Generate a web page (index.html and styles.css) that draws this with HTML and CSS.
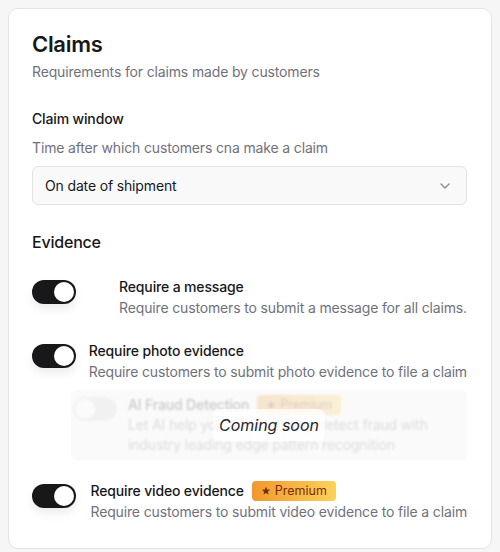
FILE: index.html
```html
<!DOCTYPE html>
<html>
<head>
<meta charset="utf-8">
<link rel="stylesheet" href="styles.css">
</head>
<body>
<div class="card">
  <h1 class="title">Claims</h1>
  <p class="subtitle">Requirements for claims made by customers</p>

  <div class="field">
    <div class="label">Claim window</div>
    <div class="helper">Time after which customers cna make a claim</div>
    <div class="select">
      <span>On date of shipment</span>
      <svg class="chevron" width="10" height="6" viewBox="0 0 10 6"><path d="M1 1l4 4 4-4" fill="none" stroke="#8a8a90" stroke-width="1.3" stroke-linecap="round" stroke-linejoin="round"/></svg>
    </div>
  </div>

  <h2 class="section">Evidence</h2>

  <div class="row row-first">
    <div class="toggle"><span class="thumb"></span></div>
    <div class="text">
      <div class="row-title">Require a message</div>
      <div class="row-desc">Require customers to submit a message for all claims.</div>
    </div>
  </div>

  <div class="row row-second">
    <div class="toggle"><span class="thumb"></span></div>
    <div class="text">
      <div class="row-title">Require photo evidence</div>
      <div class="row-desc">Require customers to submit photo evidence to file a claim</div>
    </div>
  </div>

  <div class="soon">
    <div class="soon-inner">
      <div class="toggle toggle-off"><span class="thumb"></span></div>
      <div class="soon-text">
        <div class="row-title">AI Fraud Detection <span class="badge"><svg width="10" height="10" viewBox="0 0 24 24"><path d="M12 2l2.9 6.3 6.9.7-5.2 4.6 1.5 6.8L12 16.9l-6.1 3.5 1.5-6.8L2.2 9l6.9-.7z" fill="#7a2e0e"/></svg>Premium</span></div>
        <div class="row-desc">Let AI help you automatically detect fraud with industry leading edge pattern recognition</div>
      </div>
    </div>
    <div class="soon-label">Coming soon</div>
  </div>

  <div class="row row-third">
    <div class="toggle"><span class="thumb"></span></div>
    <div class="text">
      <div class="row-title">Require video evidence <span class="badge"><svg width="10" height="10" viewBox="0 0 24 24"><path d="M12 2l2.9 6.3 6.9.7-5.2 4.6 1.5 6.8L12 16.9l-6.1 3.5 1.5-6.8L2.2 9l6.9-.7z" fill="#7a2e0e"/></svg>Premium</span></div>
      <div class="row-desc">Require customers to submit video evidence to file a claim</div>
    </div>
  </div>
</div>
</body>
</html>
```

FILE: styles.css
```css
* { box-sizing: border-box; }
html, body { margin: 0; padding: 0; }
body {
  background: #f6f6f6;
  font-family: Inter, "Noto Sans", sans-serif;
  color: #18181b;
  padding: 8px 0 0 8px;
  letter-spacing: -0.15px;
}
.card {
  width: 484px;
  height: 541px;
  background: #fff;
  border: 1px solid #e4e4e7;
  border-radius: 10px;
  padding: 21px 24px 24px 23px;
}
.title {
  margin: 0;
  font-size: 22px;
  line-height: 28px;
  font-weight: 600;
  letter-spacing: -0.3px;
}
.subtitle {
  margin: 4px 0 0;
  font-size: 14px;
  line-height: 20px;
  color: #71717a;
}
.field { margin-top: 27px; }
.label {
  font-size: 14px;
  line-height: 20px;
  font-weight: 500;
}
.helper {
  margin-top: 9px;
  font-size: 14px;
  line-height: 20px;
  color: #71717a;
}
.select {
  margin-top: 8px;
  height: 39px;
  border: 1px solid #e4e4e7;
  border-radius: 6px;
  background: #f9f9f9;
  display: flex;
  align-items: center;
  justify-content: space-between;
  padding: 0 16px 0 12px;
  font-size: 14px;
}
.chevron { display: block; }
.section {
  margin: 27px 0 0;
  font-size: 16px;
  line-height: 20px;
  font-weight: 500;
  letter-spacing: -0.2px;
}
.row {
  display: flex;
  justify-content: space-between;
  align-items: flex-start;
}
.row-first { margin-top: 25px; }
.row-second { margin-top: 23px; }
.row-third { margin-top: 21px; }
.toggle {
  width: 44px;
  height: 24px;
  border-radius: 12px;
  background: #18181b;
  margin-top: 3px;
  flex: none;
  padding: 2px;
  display: flex;
  justify-content: flex-end;
  box-shadow: 0 5px 10px rgba(0,0,0,0.08);
}
.thumb {
  width: 20px;
  height: 20px;
  border-radius: 50%;
  background: #fff;
}
.row-title {
  font-size: 14px;
  line-height: 20px;
  font-weight: 500;
  display: flex;
  align-items: center;
  gap: 8px;
}
.row-desc {
  font-size: 14px;
  line-height: 20px;
  color: #71717a;
  margin-top: 1px;
}
.badge {
  display: inline-flex;
  align-items: center;
  gap: 4px;
  height: 20px;
  padding: 0 9px;
  border-radius: 4px;
  background: linear-gradient(90deg, #f0982e, #fcd15a);
  color: #7a2e0e;
  font-size: 12.5px;
  font-weight: 400;
  letter-spacing: 0;
}
.soon {
  position: relative;
  margin: 8px 0 0 39px;
  height: 70px;
  border-radius: 6px;
  background: #fafafa;
}
.soon-inner {
  display: flex;
  align-items: flex-start;
  padding: 5px 0 0 2px;
  filter: blur(1.2px);
  opacity: 0.22;
}
.toggle-off {
  background: #d4d4d8;
  justify-content: flex-start;
  margin-top: 2px;
  box-shadow: none;
}
.soon-text {
  margin-left: 11px;
  max-width: 335px;
}
.soon-text .row-desc { margin-top: 0; }
.soon-label {
  position: absolute;
  left: 50%;
  top: 50%;
  transform: translate(-50%, -50%);
  padding: 5px 6px;
  border-radius: 6px;
  background: rgba(255,255,255,0.75);
  font-size: 16px;
  line-height: 22px;
  font-style: italic;
  color: #27272a;
  white-space: nowrap;
  letter-spacing: 0;
}
```
